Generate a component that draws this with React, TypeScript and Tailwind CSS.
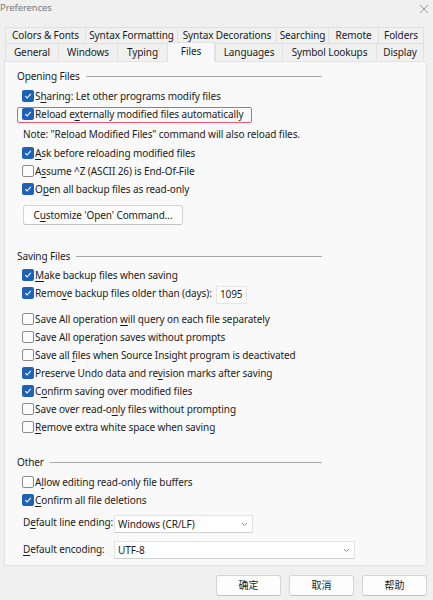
import React from 'react'

const font = { fontFamily: '"Noto Sans", "Noto Sans CJK SC", sans-serif' }

type Label = { pre: string; u: string; post: string }

const L = (pre: string, u: string, post: string): Label => ({ pre, u, post })

const Text: React.FC<{ label: Label }> = ({ label }) => (
    <span className="whitespace-nowrap">
        {label.pre}
        <span className="underline underline-offset-2">{label.u}</span>
        {label.post}
    </span>
)

const CheckBox: React.FC<{ checked: boolean }> = ({ checked }) =>
    checked ? (
        <span className="flex h-[12px] w-[12px] shrink-0 items-center justify-center rounded-[2px] bg-[#1e62b8]">
            <svg width="8" height="8" viewBox="0 0 8 8">
                <path d="M1.3 4.2 L3.1 6 L6.8 1.8" fill="none" stroke="#fff" strokeWidth="1.1" />
            </svg>
        </span>
    ) : (
        <span className="h-[12px] w-[12px] shrink-0 rounded-[2px] border border-[#8c8c8c] bg-[#fbfbfb]" />
    )

const Check: React.FC<{ checked: boolean; label: Label; className?: string }> = ({ checked, label, className = '' }) => (
    <div className={`flex h-[18px] items-center gap-[1px] pl-[17px] ${className}`}>
        <CheckBox checked={checked} />
        <Text label={label} />
    </div>
)

const Group: React.FC<{ title: string; className?: string }> = ({ title, className = '' }) => (
    <div className={`flex h-[18px] items-center pl-[12px] ${className}`}>
        <span className="whitespace-nowrap">{title}</span>
        <span className="ml-[6px] h-px flex-1 bg-[#a8a8a8]" />
        <span className="w-[104px]" />
    </div>
)

const Select: React.FC<{ value: string; width: string }> = ({ value, width }) => (
    <div className={`flex h-[18px] items-center justify-between border border-[#e3e3e3] border-b-[#d0d0d0] bg-white pl-[3px] pr-[4px] ${width}`}>
        <span>{value}</span>
        <svg width="7" height="5" viewBox="0 0 7 5">
            <path d="M1 1 L3.5 3.5 L6 1" fill="none" stroke="#888" strokeWidth="0.9" />
        </svg>
    </div>
)

const tabs1 = [
    ['Colors & Fonts', 'w-[80px]'],
    ['Syntax Formatting', 'w-[92px]'],
    ['Syntax Decorations', 'w-[99px]'],
    ['Searching', 'w-[52px]'],
    ['Remote', 'w-[50px]'],
    ['Folders', 'w-[46px]'],
]

const tabs2 = [
    ['General', 'w-[53px]'],
    ['Windows', 'w-[59px]'],
    ['Typing', 'w-[50px]'],
    ['Files', 'w-[48px]'],
    ['Languages', 'w-[67px]'],
    ['Symbol Lookups', 'w-[94px]'],
    ['Display', 'w-[48px]'],
]

const App: React.FC = () => {
    return (
        <div
            className="flex h-[600px] w-[433px] flex-col overflow-hidden bg-[#f0f0f0] text-[10px] tracking-[-0.1px] text-[#1b1b1b]"
            style={font}
        >
            <div className="flex h-[17px] items-center justify-between pr-[4px]">
                <span className="text-[9.5px] text-[#7a7a7a]">Preferences</span>
                <svg width="10" height="10" viewBox="0 0 10 10">
                    <path d="M1 1 L9 9 M9 1 L1 9" stroke="#8a8a8a" strokeWidth="0.9" />
                </svg>
            </div>

            <div className="ml-[5px] mt-[10px] flex h-[16px]">
                {tabs1.map(([t, w]) => (
                    <div
                        key={t}
                        className={`flex items-center justify-center border border-b-0 border-r-0 border-[#e0e0e0] bg-[#f0f0f0] last:border-r ${w}`}
                    >
                        <span className="whitespace-nowrap">{t}</span>
                    </div>
                ))}
            </div>
            <div className="ml-[5px] flex h-[18px] items-end">
                {tabs2.map(([t, w]) =>
                    t === 'Files' ? (
                        <div
                            key={t}
                            className={`z-10 -mb-px flex h-[20px] items-start justify-center border border-b-0 border-[#e0e0e0] bg-[#f9f9f9] pt-[1px] ${w}`}
                        >
                            <span>{t}</span>
                        </div>
                    ) : (
                        <div
                            key={t}
                            className={`flex h-[18px] items-center justify-center border border-r-0 border-b-0 border-[#e0e0e0] bg-[#f0f0f0] last:border-r ${w}`}
                        >
                            <span className="whitespace-nowrap">{t}</span>
                        </div>
                    )
                )}
            </div>

            <div className="ml-[4px] flex h-[505px] w-[423px] flex-col border border-[#e3e3e3] bg-[#f9f9f9] pt-[5px]">
                <Group title="Opening Files" />
                <Check className="mt-[2px]" checked label={L('S', 'h', 'aring: Let other programs modify files')} />
                <div className="relative">
                    <div className="absolute left-[12px] top-[2px] h-[16px] w-[235px] rounded-[2px] border border-[#f2556f]" />
                    <Check checked label={L('Reload e', 'x', 'ternally modified files automatically')} />
                </div>
                <div className="mt-[2px] flex h-[18px] items-center pl-[18px] whitespace-nowrap">
                    Note: "Reload Modified Files" command will also reload files.
                </div>
                <Check className="mt-[1px]" checked label={L('', 'A', 'sk before reloading modified files')} />
                <Check checked={false} label={L('A', 's', 'sume ^Z (ASCII 26) is End-Of-File')} />
                <Check checked label={L('O', 'p', 'en all backup files as read-only')} />
                <div className="ml-[18px] mt-[7px] flex h-[20px] w-[160px] items-center justify-center rounded-[3px] border border-[#d4d4d4] border-b-[#c2c2c2] bg-[#fdfdfd]">
                    <Text label={L('C', 'u', "stomize 'Open' Command...")} />
                </div>

                <Group title="Saving Files" className="mt-[22px]" />
                <Check className="mt-[1px]" checked label={L('', 'M', 'ake backup files when saving')} />
                <div className="flex h-[18px] items-center">
                    <Check checked label={L('Remo', 'v', 'e backup files older than (days):')} />
                    <div className="absolute ml-[211px] mt-[3px] flex h-[18px] w-[31px] items-center border border-[#e6e6e6] bg-white pl-[3px]">
                        1095
                    </div>
                </div>
                <Check className="mt-[8px]" checked={false} label={L('Save All operation ', 'w', 'ill query on each file separately')} />
                <Check checked={false} label={L('Save All opera', 't', 'ion saves without prompts')} />
                <Check checked={false} label={L('Save all ', 'f', 'iles when Source Insight program is deactivated')} />
                <Check checked label={L('Preserve Undo data and re', 'v', 'ision marks after saving')} />
                <Check checked label={L('C', 'o', 'nfirm saving over modified files')} />
                <Check checked={false} label={L('Save over read-o', 'n', 'ly files without prompting')} />
                <Check checked={false} label={L('', 'R', 'emove extra white space when saving')} />

                <Group title="Other" className="mt-[17px]" />
                <Check className="mt-[2px]" checked={false} label={L('A', 'l', 'low editing read-only file buffers')} />
                <Check checked label={L('', 'C', 'onfirm all file deletions')} />
                <div className="mt-[6px] flex items-center pl-[18px]">
                    <span className="w-[91px] -translate-y-[2px]">
                        <Text label={L('D', 'e', 'fault line ending:')} />
                    </span>
                    <Select value="Windows (CR/LF)" width="w-[139px]" />
                </div>
                <div className="mt-[8px] flex items-center pl-[18px]">
                    <span className="w-[91px] -translate-y-[1px]">
                        <Text label={L('', 'D', 'efault encoding:')} />
                    </span>
                    <Select value="UTF-8" width="w-[241px]" />
                </div>
            </div>

            <div className="mt-[9px] flex justify-end gap-[8px] pr-[6px]">
                {['确定', '取消', '帮助'].map(b => (
                    <div
                        key={b}
                        className="flex h-[21px] w-[65px] items-center justify-center rounded-[3px] border border-[#d4d4d4] border-b-[#c2c2c2] bg-[#fdfdfd] text-[10px]"
                    >
                        {b}
                    </div>
                ))}
            </div>
        </div>
    )
}

export default App
